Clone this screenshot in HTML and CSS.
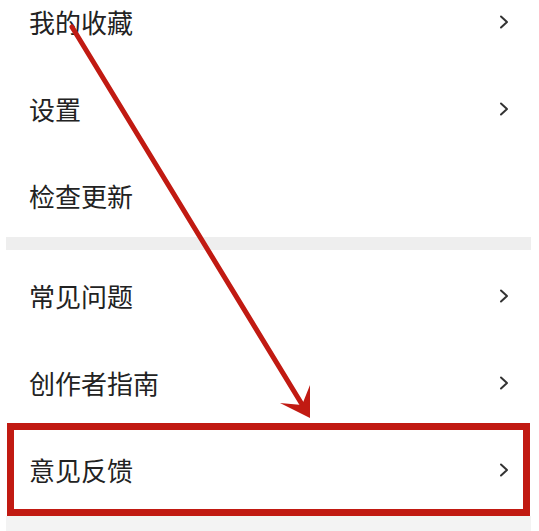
FILE: index.html
```html
<!DOCTYPE html>
<html lang="zh">
<head>
<meta charset="utf-8">
<link rel="stylesheet" href="styles.css">
</head>
<body>
<div class="page">
  <section class="group">
    <div class="row"><span class="label">我的收藏</span><svg class="chev" viewBox="0 0 10 14"><polyline points="2,1.5 8,7 2,12.5"/></svg></div>
    <div class="row"><span class="label">设置</span><svg class="chev" viewBox="0 0 10 14"><polyline points="2,1.5 8,7 2,12.5"/></svg></div>
    <div class="row"><span class="label">检查更新</span></div>
  </section>
  <div class="divider"></div>
  <section class="group">
    <div class="row"><span class="label">常见问题</span><svg class="chev" viewBox="0 0 10 14"><polyline points="2,1.5 8,7 2,12.5"/></svg></div>
    <div class="row"><span class="label">创作者指南</span><svg class="chev" viewBox="0 0 10 14"><polyline points="2,1.5 8,7 2,12.5"/></svg></div>
    <div class="row"><span class="label">意见反馈</span><svg class="chev" viewBox="0 0 10 14"><polyline points="2,1.5 8,7 2,12.5"/></svg></div>
  </section>
  <div class="footer-band"></div>
</div>
<svg class="annot" viewBox="0 0 539 531" width="539" height="531">
  <rect x="10.5" y="426.5" width="516" height="86" fill="none" stroke="#c11a12" stroke-width="7"/>
  <line x1="72" y1="27" x2="303" y2="406" stroke="#c11a12" stroke-width="5" stroke-linecap="round"/>
  <polygon points="310,418 280,403 302,405 310,385" fill="#c11a12"/>
</svg>
</body>
</html>
```

FILE: styles.css
```css
html, body {
  margin: 0;
  padding: 0;
  background: #ffffff;
  width: 539px;
  height: 531px;
  overflow: hidden;
}
body {
  position: relative;
  font-family: "Noto Sans CJK SC", "Noto Sans", sans-serif;
  color: #222222;
}
.page {
  margin-top: -24px;
  padding: 0 8px 0 6px;
  display: flex;
  flex-direction: column;
}
.group {
  display: flex;
  flex-direction: column;
  background: #ffffff;
}
.row {
  height: 87px;
  box-sizing: border-box;
  padding: 5px 22px 0 23px;
  display: flex;
  align-items: center;
  justify-content: space-between;
}
.label {
  font-size: 26px;
  line-height: 1;
  letter-spacing: 0;
}
.chev {
  width: 10px;
  height: 14px;
  fill: none;
  stroke: #333333;
  stroke-width: 2;
  stroke-linecap: round;
  stroke-linejoin: round;
}
.divider {
  height: 13px;
  background: #eeeeee;
}
.footer-band {
  height: 40px;
  margin-top: 5px;
  background: #f3f3f3;
}
.annot {
  position: absolute;
  left: 0;
  top: 0;
  pointer-events: none;
}
```
